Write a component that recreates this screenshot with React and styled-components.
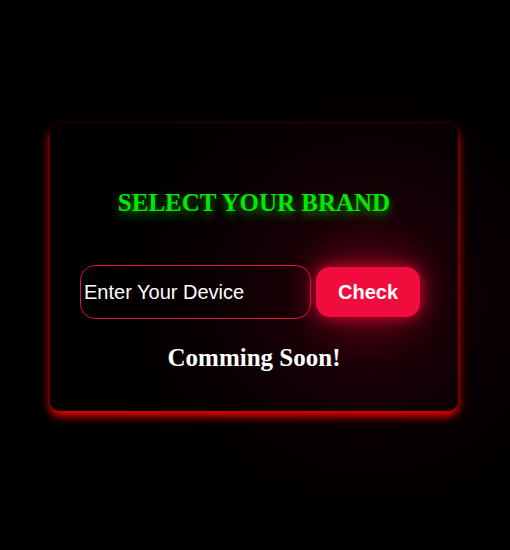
import React from "react";
import styled, { createGlobalStyle } from "styled-components";

const GlobalStyle = createGlobalStyle`
    html, body {
        margin: 0;
        padding: 0;
        background: #000;
    }
`;

const Page = styled.div`
    width: 510px;
    height: 550px;
    box-sizing: border-box;
    padding: 124px 0 0 50px;
    background: radial-gradient(circle at 370px 300px, rgba(40, 0, 10, 0.55) 0, rgba(10, 0, 3, 0.4) 180px, #000 330px);
    overflow: hidden;
`;

const Card = styled.div`
    width: 408px;
    height: 287px;
    box-sizing: border-box;
    padding: 65px 38px 0 30px;
    border-radius: 10px;
    background: radial-gradient(circle at 318px 168px, rgba(90, 0, 20, 0.75) 0, rgba(40, 0, 10, 0.4) 80px, rgba(6, 0, 2, 1) 190px, #000 280px);
    box-shadow: 0 5px 10px #ff0000;
    display: flex;
    flex-direction: column;
    align-items: center;
`;

const Title = styled.h2`
    margin: 0 0 0 8px;
    font-family: "Liberation Serif", "Times New Roman", serif;
    font-weight: 700;
    font-size: 25px;
    color: #00ea00;
    text-shadow: 0 4px 8px rgba(0, 230, 0, 0.6);
`;

const Row = styled.div`
    margin-top: 48px;
    display: flex;
    align-items: center;
    gap: 5px;
    align-self: flex-start;
`;

const DeviceInput = styled.input`
    width: 231px;
    height: 54px;
    box-sizing: border-box;
    padding: 0 0 0 3px;
    border: 1px solid #e0103c;
    border-radius: 15px;
    background: transparent;
    color: #fff;
    font-family: "Liberation Sans", Arial, sans-serif;
    font-size: 20px;
    outline: none;

    &::placeholder {
        color: #fff;
        opacity: 1;
    }
`;

const CheckButton = styled.button`
    width: 104px;
    height: 50px;
    border: none;
    border-radius: 14px;
    background: #f00c3c;
    color: #fff;
    font-family: "Liberation Sans", Arial, sans-serif;
    font-weight: 700;
    font-size: 20px;
    box-shadow: 0 0 16px rgba(240, 12, 60, 0.85), 0 0 40px rgba(240, 12, 60, 0.3);
    cursor: pointer;
`;

const Soon = styled.h2`
    margin: 25px 0 0 8px;
    font-family: "Liberation Serif", "Times New Roman", serif;
    font-weight: 700;
    font-size: 25px;
    color: #fff;
`;

function App() {
    return (
        <Page>
            <GlobalStyle />
            <Card>
                <Title>SELECT YOUR BRAND</Title>
                <Row>
                    <DeviceInput placeholder="Enter Your Device" />
                    <CheckButton>Check</CheckButton>
                </Row>
                <Soon>Comming Soon!</Soon>
            </Card>
        </Page>
    );
}

export default App;
